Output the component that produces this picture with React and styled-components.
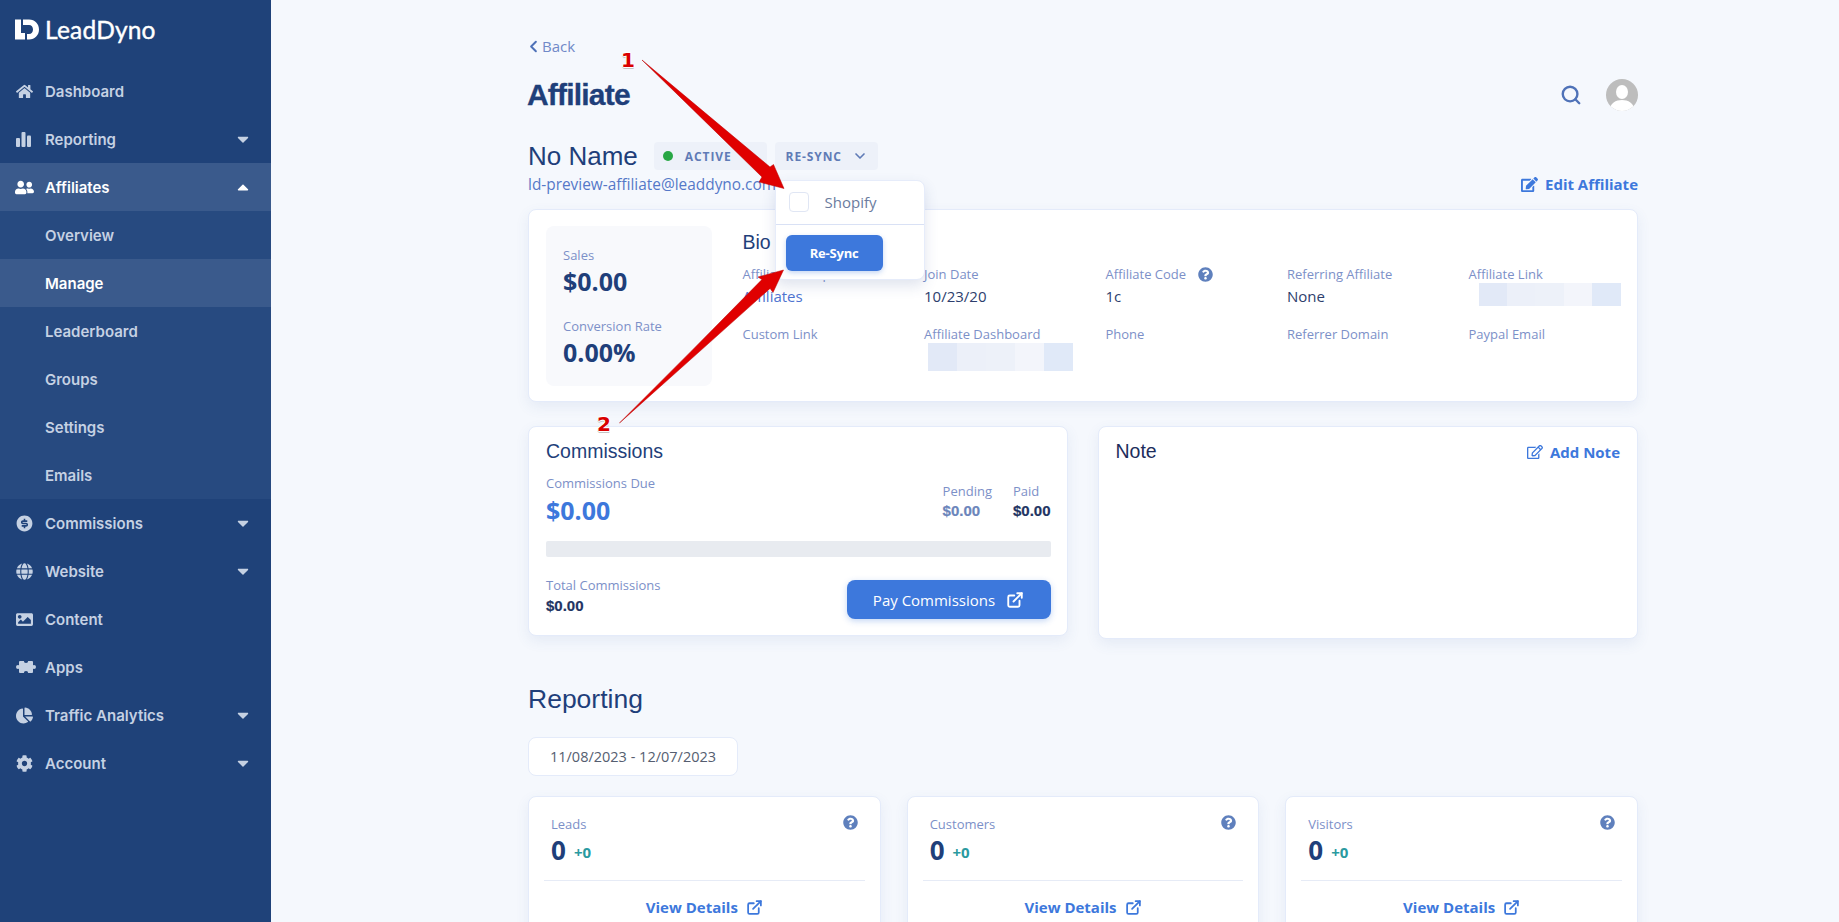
import React from "react";
import styled, { createGlobalStyle } from "styled-components";
import {
  FaHome,
  FaUserFriends,
  FaGlobe,
  FaImage,
  FaChartPie,
  FaCog,
  FaCaretDown,
  FaCaretUp,
  FaEdit,
  FaRegEdit,
  FaQuestionCircle,
} from "react-icons/fa";
import { RiMoneyDollarCircleFill } from "react-icons/ri";
import { ChevronLeft, ChevronDown, Search, ExternalLink } from "lucide-react";

const GlobalStyle = createGlobalStyle`
  html, body {
    margin: 0;
    height: 100%;
    overflow: hidden;
    background: #f5f8fd;
    font-family: "Open Sans", "Liberation Sans", sans-serif;
  }
  * { box-sizing: border-box; }
`;

const Shell = styled.div`
  position: relative;
  display: flex;
  height: 922px;
  overflow: hidden;
`;

/* sidebar */
const Sidebar = styled.nav`
  flex: 0 0 271px;
  background: #1f4279;
  display: flex;
  flex-direction: column;
`;

const Logo = styled.div`
  height: 67px;
  display: flex;
  align-items: flex-start;
  padding: 15px 0 0 15px;
  gap: 6px;
  color: #fff;
`;

const LogoText = styled.span`
  font-family: Lato, sans-serif;
  font-size: 24.5px;
  line-height: 30px;
  letter-spacing: 0.2px;
  -webkit-text-stroke: 0.4px #fff;
`;

const NavItem = styled.a`
  height: 48px;
  display: flex;
  align-items: center;
  padding: 0 16px;
  font-family: Inter, sans-serif;
  font-size: 15px;
  font-weight: 600;
  color: ${({ $active }) => ($active ? "#fff" : "#c5d1e3")};
  background: ${({ $active, $sub }) =>
    $active ? "#3a5a8c" : $sub ? "#274a80" : "transparent"};
`;

const NavIcon = styled.span`
  width: 29px;
  display: flex;
  align-items: center;
  font-size: ${({ $size }) => $size || 17}px;
  margin-left: ${({ $size }) => ($size > 17 ? "-1px" : "0")};
  margin-right: ${({ $size }) => ($size > 17 ? "1px" : "0")};
`;

const NavLabel = styled.span`
  flex: 1;
  padding-left: ${({ $sub }) => ($sub ? "29px" : "0")};
`;

const Caret = styled.span`
  display: flex;
  font-size: 18px;
  transform: translateX(-3px);
`;

/* page */
const Main = styled.main`
  flex: 1;
  padding: 36px 0 0 257px;
`;

const Column = styled.div`
  width: 1110px;
`;

const BackLink = styled.a`
  display: flex;
  align-items: center;
  height: 20px;
  font-size: 15px;
  color: #7089c8;
  svg { color: #4f72b8; margin-left: -4px; margin-right: -1px; }
`;

const TitleRow = styled.div`
  display: flex;
  align-items: center;
  justify-content: space-between;
  margin-top: 21px;
  height: 36px;
`;

const Title = styled.h1`
  margin: 0 0 0 -1px;
  font-family: "Liberation Sans", sans-serif;
  font-size: 30px;
  font-weight: 700;
  letter-spacing: -0.8px;
  color: #1f3f7a;
  -webkit-text-stroke: 0.3px #1f3f7a;
`;

const TopActions = styled.div`
  display: flex;
  align-items: center;
  gap: 24px;
  color: #4f72b8;
`;

const NameRow = styled.div`
  display: flex;
  align-items: center;
  margin-top: 29px;
  height: 28px;
`;

const Name = styled.h2`
  margin: 0 16px 0 0;
  font-family: "Liberation Sans", sans-serif;
  font-size: 26px;
  font-weight: 400;
  color: #1f3f7a;
`;

const Pill = styled.div`
  position: relative;
  height: 28px;
  display: flex;
  align-items: center;
  margin-right: 8px;
  padding: 0 ${({ $right }) => $right} 0 ${({ $left }) => $left};
  background: #edf1f9;
  border-radius: 4px;
  font-size: 12px;
  font-weight: 700;
  letter-spacing: 0.9px;
  color: #5f7bb6;
`;

const Dot = styled.i`
  width: 10px;
  height: 10px;
  border-radius: 50%;
  background: #28a745;
  margin-right: 12px;
`;

const Dropdown = styled.div`
  position: absolute;
  z-index: 5;
  left: 0;
  top: 38px;
  width: 150px;
  height: 100px;
  background: #fff;
  border: 1px solid #e6ecfa;
  border-radius: 8px;
  box-shadow: 0 6px 14px rgba(60, 90, 150, 0.16);
`;

const DropRow = styled.div`
  height: 44px;
  display: flex;
  align-items: center;
  padding: 0 0 2px 13px;
  gap: 16px;
  border-bottom: 1px solid #d9e1f5;
  font-size: 15px;
  font-weight: 400;
  letter-spacing: 0;
  color: #6b7c9e;
`;

const Check = styled.span`
  width: 20px;
  height: 20px;
  border: 1px solid #e0e6f4;
  border-radius: 4px;
  background: #fff;
`;

const ResyncButton = styled.button`
  display: block;
  margin: 10px 0 0 10px;
  width: 97px;
  height: 36px;
  border: 0;
  border-radius: 6px;
  background: #3d78dc;
  box-shadow: 0 2px 5px rgba(61, 120, 220, 0.3);
  color: #fff;
  font-family: "Open Sans", sans-serif;
  font-size: 13px;
  font-weight: 700;
  letter-spacing: -0.2px;
`;

const EmailRow = styled.div`
  display: flex;
  align-items: center;
  justify-content: space-between;
  height: 20px;
  margin-top: 4px;
`;

const Email = styled.span`
  font-size: 15.4px;
  color: #5578c8;
`;

const ActionLink = styled.a`
  display: flex;
  align-items: center;
  gap: 7px;
  font-size: 15px;
  font-weight: 700;
  color: #3d78dc;
`;

const Card = styled.section`
  background: #fff;
  border: 1px solid #e4ebfa;
  border-radius: 8px;
  box-shadow: 0 5px 14px rgba(70, 100, 170, 0.09);
`;

const BioCard = styled(Card)`
  display: flex;
  gap: 30.5px;
  height: 193px;
  margin-top: 15px;
  padding: 16px 17px;
`;

const SalesPanel = styled.div`
  flex: 0 0 166px;
  height: 160px;
  padding: 20px 17px 0;
  background: #f8f9fc;
  border-radius: 8px;
`;

const Label = styled.div`
  font-size: 13px;
  line-height: 18px;
  color: #7c90c8;
`;

const BigMoney = styled.div`
  font-size: 25px;
  font-weight: 700;
  line-height: 34px;
  color: ${({ $blue }) => ($blue ? "#3d78dc" : "#1f3f7a")};
  margin-top: ${({ $blue }) => ($blue ? "1px" : "0")};
  margin-bottom: ${({ $gap }) => $gap || "0"};
`;

const BioBody = styled.div`
  flex: 1;
  padding-top: 4px;
`;

const CardTitle = styled.h3`
  margin: 0;
  font-family: "Liberation Sans", sans-serif;
  font-size: 19.5px;
  font-weight: 400;
  line-height: 24px;
  color: ${({ $dark }) => ($dark ? "#1c2d5c" : "#1f3f7a")};
`;

const BioGrid = styled.div`
  display: grid;
  grid-template-columns: repeat(5, 151.5px);
  column-gap: 30px;
  grid-auto-rows: 60px;
  margin-top: 11px;
`;

const BioValue = styled.div`
  margin-top: 1px;
  font-size: 15px;
  line-height: 24px;
  color: ${({ $link }) => ($link ? "#4f74d0" : "#2d3e6d")};
`;

const LabelRow = styled.div`
  display: flex;
  align-items: center;
  gap: 12px;
  color: #5f80bd;
`;

const Blur = styled.div`
  display: flex;
  width: ${({ $w }) => $w}px;
  height: ${({ $h }) => $h}px;
  margin-left: ${({ $x }) => $x}px;
`;

const BlurPart = styled.span`
  flex: 1;
  background: ${({ $c }) => $c};
`;

const CardRow = styled.div`
  display: flex;
  gap: 30px;
  align-items: flex-start;
  margin-top: 24px;
`;

const CommissionCard = styled(Card)`
  flex: 0 0 539.5px;
  height: 210px;
  padding: 12px 16px 0 17px;
`;

const NoteCard = styled(Card)`
  flex: 1;
  height: 213px;
  padding: 12px 17px 0 17px;
  display: flex;
  justify-content: space-between;
  align-items: flex-start;
`;

const AddNote = styled(ActionLink)`
  margin-top: 3px;
  line-height: 20px;
`;

const DueRow = styled.div`
  display: flex;
  justify-content: space-between;
  margin-top: 11px;
`;

const SmallStats = styled.div`
  display: flex;
  gap: 21px;
  padding-top: 8px;
`;

const SmallMoney = styled.div`
  font-family: "Liberation Sans", sans-serif;
  font-size: 15px;
  font-weight: 700;
  line-height: 22px;
  color: ${({ $tone }) => $tone};
  -webkit-text-stroke: 0.2px ${({ $tone }) => $tone};
`;

const Bar = styled.div`
  height: 16px;
  margin-top: 14px;
  background: #e8ebf0;
  border-radius: 2px;
`;

const TotalRow = styled.div`
  display: flex;
  justify-content: space-between;
  margin-top: 23px;
`;

const TotalBlock = styled.div`
  margin-top: -4px;
  ${SmallMoney} {
    margin-top: 1px;
  }
`;

const PayButton = styled.button`
  width: 204px;
  height: 39px;
  border: 0;
  border-radius: 8px;
  background: #3d78dc;
  box-shadow: 0 2px 6px rgba(61, 120, 220, 0.3);
  color: #fff;
  display: flex;
  align-items: center;
  justify-content: center;
  gap: 11px;
  font-family: "Open Sans", sans-serif;
  font-size: 15px;
`;

const SectionTitle = styled.h2`
  margin: 44px 0 0;
  font-family: "Liberation Sans", sans-serif;
  font-size: 26.5px;
  font-weight: 400;
  line-height: 32px;
  color: #1f3f7a;
`;

const DateBox = styled.div`
  width: 210px;
  height: 39px;
  margin-top: 22px;
  display: flex;
  align-items: center;
  justify-content: center;
  background: #fff;
  border: 1px solid #e4ebfa;
  border-radius: 8px;
  font-size: 14.5px;
  color: #555e70;
`;

const StatGrid = styled.div`
  display: grid;
  grid-template-columns: repeat(3, 1fr);
  column-gap: 26px;
  margin-top: 20px;
`;

const StatCard = styled(Card)`
  height: 170px;
  padding: 18px 15px 0;
`;

const StatHead = styled.div`
  display: flex;
  justify-content: space-between;
  height: 66px;
  padding: 0 7px;
  border-bottom: 1px solid #e6ebf6;
  color: #5f80bd;
`;

const StatNumber = styled.div`
  display: flex;
  align-items: center;
  height: 32px;
  margin-top: 1px;
  gap: 8px;
  font-size: 26px;
  font-weight: 700;
  color: #1f3f7a;
`;

const Delta = styled.span`
  font-size: 15px;
  font-weight: 700;
  color: #2a9aa0;
  padding-top: 3px;
`;

const StatFoot = styled.a`
  display: flex;
  align-items: center;
  justify-content: center;
  gap: 8px;
  height: 52px;
  font-size: 15px;
  font-weight: 700;
  color: #3d78dc;
`;

/* red annotations drawn on top of the shot */
const Annotations = styled.svg`
  position: absolute;
  inset: 0;
  z-index: 10;
  pointer-events: none;
`;

const Marker = styled.span`
  position: absolute;
  z-index: 11;
  left: ${({ $x }) => $x}px;
  top: ${({ $y }) => $y}px;
  font-family: "DejaVu Sans", sans-serif;
  font-size: 20px;
  line-height: 20px;
  font-weight: 700;
  color: #d90000;
  text-shadow: -1px 0 #fff, 1px 0 #fff, 0 -1px #fff, 0 1px #fff, 0 2px #c4c4c4, -1px 1px #d8d8d8;
`;

const BarsIcon = () => (
  <svg width="15" height="15" viewBox="0 0 15 15" fill="currentColor">
    <rect x="0" y="6" width="4" height="9" rx="1" />
    <rect x="5.5" y="0" width="4" height="15" rx="1" />
    <rect x="11" y="3.5" width="4" height="11.5" rx="1" />
  </svg>
);

const PuzzleIcon = () => (
  <svg width="20" height="14" viewBox="0 0 20 14" fill="currentColor">
    <rect x="3" y="1" width="14" height="12" rx="1" />
    <circle cx="2" cy="7" r="2" />
    <circle cx="18" cy="7" r="2" />
    <circle cx="10" cy="0.8" r="2.2" fill="#1f4279" />
    <circle cx="10" cy="13.2" r="2.2" fill="#1f4279" />
  </svg>
);

const LogoMark = () => (
  <svg width="24" height="21" viewBox="0 0 24 20" fill="#fff" style={{ marginTop: 4 }}>
    <path d="M0 0H6V13.5H10V20H0Z" />
    <path d="M8 0H14C20 0 24 4.5 24 10C24 15.5 20 20 14 20H12V14.5H14C16.5 14.5 18 12.5 18 10C18 7.5 16.5 5.5 14 5.5H8Z" />
  </svg>
);

const Avatar = () => (
  <svg width="32" height="32" viewBox="0 0 32 32">
    <defs>
      <clipPath id="avatar-clip">
        <circle cx="16" cy="16" r="16" />
      </clipPath>
    </defs>
    <g clipPath="url(#avatar-clip)">
      <rect width="32" height="32" fill="#bdbdbd" />
      <ellipse cx="16" cy="13" rx="6" ry="7" fill="#fff" />
      <path d="M3 32C4 24 10 21 16 21C22 21 28 24 29 32Z" fill="#fff" />
    </g>
  </svg>
);

const navItems = [
  { label: "Dashboard", icon: <FaHome /> },
  { label: "Reporting", icon: <BarsIcon />, caret: "down" },
  { label: "Affiliates", icon: <FaUserFriends />, iconSize: 19, caret: "up", active: true },
  { label: "Overview", sub: true },
  { label: "Manage", sub: true, active: true },
  { label: "Leaderboard", sub: true },
  { label: "Groups", sub: true },
  { label: "Settings", sub: true },
  { label: "Emails", sub: true },
  { label: "Commissions", icon: <RiMoneyDollarCircleFill />, iconSize: 19, caret: "down" },
  { label: "Website", icon: <FaGlobe />, caret: "down" },
  { label: "Content", icon: <FaImage /> },
  { label: "Apps", icon: <PuzzleIcon /> },
  { label: "Traffic Analytics", icon: <FaChartPie />, caret: "down" },
  { label: "Account", icon: <FaCog />, caret: "down" },
];

const blurTones = ["#e2e9f7", "#ecf0f9", "#edf1f9", "#f3f5fb", "#e0e9f8"];

const Redacted = (props) => (
  <Blur {...props}>
    {blurTones.map((tone) => (
      <BlurPart key={tone} $c={tone} />
    ))}
  </Blur>
);

const stats = ["Leads", "Customers", "Visitors"];

export default function App() {
  return (
    <Shell>
      <GlobalStyle />
      <Sidebar>
        <Logo>
          <LogoMark />
          <LogoText>LeadDyno</LogoText>
        </Logo>
        {navItems.map(({ label, icon, iconSize, caret, sub, active }) => (
          <NavItem key={label} $active={active} $sub={sub}>
            {icon && <NavIcon $size={iconSize}>{icon}</NavIcon>}
            <NavLabel $sub={sub}>{label}</NavLabel>
            {caret && (
              <Caret>{caret === "up" ? <FaCaretUp /> : <FaCaretDown />}</Caret>
            )}
          </NavItem>
        ))}
      </Sidebar>

      <Main>
        <Column>
          <BackLink>
            <ChevronLeft size={19} strokeWidth={2.5} />
            Back
          </BackLink>
          <TitleRow>
            <Title>Affiliate</Title>
            <TopActions>
              <Search size={22} strokeWidth={2.6} />
              <Avatar />
            </TopActions>
          </TitleRow>
          <NameRow>
            <Name>No Name</Name>
            <Pill $left="9px" $right="35px">
              <Dot />
              ACTIVE
            </Pill>
            <Pill $left="11px" $right="10px">
              RE-SYNC
              <ChevronDown size={16} strokeWidth={2.5} style={{ marginLeft: 10 }} />
              <Dropdown>
                <DropRow>
                  <Check />
                  Shopify
                </DropRow>
                <ResyncButton>Re-Sync</ResyncButton>
              </Dropdown>
            </Pill>
          </NameRow>
          <EmailRow>
            <Email>ld-preview-affiliate@leaddyno.com</Email>
            <ActionLink>
              <FaEdit size={17} />
              Edit Affiliate
            </ActionLink>
          </EmailRow>

          <BioCard>
            <SalesPanel>
              <Label>Sales</Label>
              <BigMoney $gap="19px">$0.00</BigMoney>
              <Label>Conversion Rate</Label>
              <BigMoney>0.00%</BigMoney>
            </SalesPanel>
            <BioBody>
              <CardTitle>Bio</CardTitle>
              <BioGrid>
                <div>
                  <Label>Affiliate Group</Label>
                  <BioValue $link>Affiliates</BioValue>
                </div>
                <div>
                  <Label>Join Date</Label>
                  <BioValue>10/23/20</BioValue>
                </div>
                <div>
                  <LabelRow>
                    <Label>Affiliate Code</Label>
                    <FaQuestionCircle size={15} />
                  </LabelRow>
                  <BioValue>1c</BioValue>
                </div>
                <div>
                  <Label>Referring Affiliate</Label>
                  <BioValue>None</BioValue>
                </div>
                <div>
                  <Label>Affiliate Link</Label>
                  <Redacted $w={142} $h={23} $x={10} />
                </div>
                <div>
                  <Label>Custom Link</Label>
                </div>
                <div>
                  <Label>Affiliate Dashboard</Label>
                  <Redacted $w={145} $h={28} $x={4} />
                </div>
                <div>
                  <Label>Phone</Label>
                </div>
                <div>
                  <Label>Referrer Domain</Label>
                </div>
                <div>
                  <Label>Paypal Email</Label>
                </div>
              </BioGrid>
            </BioBody>
          </BioCard>

          <CardRow>
            <CommissionCard>
              <CardTitle>Commissions</CardTitle>
              <DueRow>
                <div>
                  <Label>Commissions Due</Label>
                  <BigMoney $blue>$0.00</BigMoney>
                </div>
                <SmallStats>
                  <div>
                    <Label>Pending</Label>
                    <SmallMoney $tone="#6b85bb">$0.00</SmallMoney>
                  </div>
                  <div>
                    <Label>Paid</Label>
                    <SmallMoney $tone="#1f3563">$0.00</SmallMoney>
                  </div>
                </SmallStats>
              </DueRow>
              <Bar />
              <TotalRow>
                <TotalBlock>
                  <Label>Total Commissions</Label>
                  <SmallMoney $tone="#1f3563">$0.00</SmallMoney>
                </TotalBlock>
                <PayButton>
                  Pay Commissions
                  <ExternalLink size={18} strokeWidth={2.5} />
                </PayButton>
              </TotalRow>
            </CommissionCard>
            <NoteCard>
              <CardTitle $dark>Note</CardTitle>
              <AddNote>
                <FaRegEdit size={16} />
                Add Note
              </AddNote>
            </NoteCard>
          </CardRow>

          <SectionTitle>Reporting</SectionTitle>
          <DateBox>11/08/2023 - 12/07/2023</DateBox>
          <StatGrid>
            {stats.map((name) => (
              <StatCard key={name}>
                <StatHead>
                  <div>
                    <Label>{name}</Label>
                    <StatNumber>
                      0<Delta>+0</Delta>
                    </StatNumber>
                  </div>
                  <FaQuestionCircle size={15} />
                </StatHead>
                <StatFoot>
                  View Details
                  <ExternalLink size={17} strokeWidth={2.5} />
                </StatFoot>
              </StatCard>
            ))}
          </StatGrid>
        </Column>
      </Main>

      <Annotations width="1839" height="922" viewBox="0 0 1839 922">
        <path d="M642 60L706 113.6L770 167L773.5 164.5L784 188.5L759 182L762 177L702 118.4Z" fill="#e00000" stroke="#b80000" strokeWidth="0.5" />
        <path d="M619.5 423L691 351.4L761.9 279.6L758 277L783.5 270L773 292.5L770.1 288.4L695 355.6Z" fill="#e00000" stroke="#b80000" strokeWidth="0.5" />
      </Annotations>
      <Marker $x={621} $y={50}>1</Marker>
      <Marker $x={597} $y={414}>2</Marker>
    </Shell>
  );
}
